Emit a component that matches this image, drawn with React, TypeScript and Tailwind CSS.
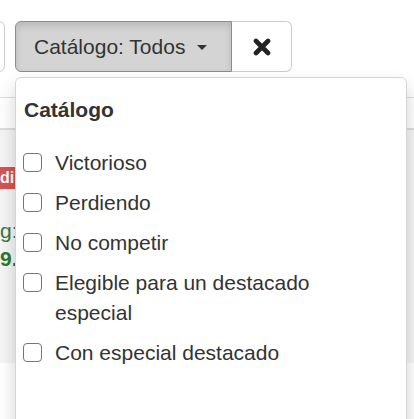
import React from 'react'

const opciones = [
  'Victorioso',
  'Perdiendo',
  'No competir',
  'Elegible para un destacado especial',
  'Con especial destacado',
]

const Casilla = () => (
  <span className="mt-[5px] block h-[19px] w-[19px] shrink-0 rounded-[4px] border-[1.5px] border-[#767676] bg-white" />
)

const App = () => {
  return (
    <div className="relative h-[419px] w-[414px] overflow-hidden bg-white font-['Liberation_Sans',Arial,sans-serif] text-[21px] leading-[30px] text-[#333]">
      {/* barra de filtros */}
      <div className="flex pt-[21px]">
        <div className="-ml-[10px] h-[51px] w-[15px] rounded-r-[6px] border border-[#ccc] bg-white" />
        <div className="ml-[10px] flex h-[51px]">
          <button className="flex items-center gap-[12px] rounded-l-[6px] border border-[#8c8c8c] bg-[#d4d4d4] pl-[18px] pr-[24px] shadow-[inset_0_4px_7px_rgba(0,0,0,0.13)]">
            <span>Catálogo: Todos</span>
            <span className="mt-[2px] block h-0 w-0 border-x-[5px] border-t-[5px] border-x-transparent border-t-[#333]" />
          </button>
          <button className="flex w-[60px] items-center justify-center rounded-r-[6px] border border-l-0 border-[#ccc] bg-white">
            <svg width="18" height="18" viewBox="0 0 18 18">
              <path d="M3 3 L15 15 M15 3 L3 15" stroke="#222" strokeWidth="4.6" strokeLinecap="round" />
            </svg>
          </button>
        </div>
      </div>

      {/* tabla de fondo */}
      <div className="mt-[25px] border-t border-[#ddd]">
        <div className="h-[32px] border-b-2 border-[#ddd]" />
        <div className="h-[233px] bg-[#f5f5f5] pt-[37px]">
          <div className="flex h-[22px] w-[15px] items-center overflow-hidden bg-[#d9534f] text-[16px] font-bold leading-[22px] text-white">
            di
          </div>
          <div className="mt-[27px] text-[#3c763d]">g:</div>
          <div className="-mt-[2px] font-bold text-[#2b7a2b]">9.</div>
        </div>
      </div>

      {/* menú desplegable */}
      <div className="absolute left-[15px] top-[77px] h-[360px] w-[392px] rounded-[6px] border border-[#d5d5d5] bg-white shadow-[0_9px_18px_rgba(0,0,0,0.18)]">
        <div className="ml-[8px] mt-[17px] font-bold">Catálogo</div>
        <div className="mt-[23px] flex flex-col gap-[10px]">
          {opciones.map((texto) => (
            <label key={texto} className="flex items-start pl-[7px] pr-[40px]">
              <Casilla />
              <span className="ml-[13px]">{texto}</span>
            </label>
          ))}
        </div>
      </div>
    </div>
  )
}

export default App
